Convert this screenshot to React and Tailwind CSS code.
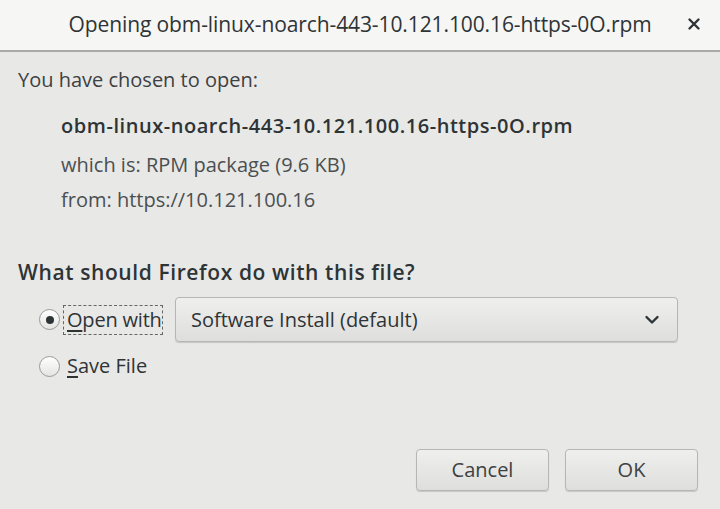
import React from "react";

export default function App() {
  const font = { fontFamily: '"Open Sans", "Noto Sans", sans-serif' };
  const btn =
    "rounded-[4px] border border-[#b6b7b3] bg-gradient-to-b from-[#efefed] to-[#dededc] shadow-[0_1px_1px_rgba(0,0,0,0.15)]";
  return (
    <div className="w-[720px] h-[509px] bg-[#e8e8e7] flex flex-col text-[#2e3436] overflow-hidden" style={font}>
      <div className="h-[52px] bg-[#f6f6f5] border-b-[2px] border-[#a9aaa7] flex items-center relative shrink-0">
        <div className="w-full text-center text-[21px] leading-[28px] tracking-[-0.1px] text-[#2e3436] pb-[2px]">
          Opening obm-linux-noarch-443-10.121.100.16-https-0O.rpm
        </div>
        <div className="absolute left-[687px] top-[17px]">
          <svg width="14" height="14" viewBox="0 0 14 14">
            <path d="M2.5 2.5 L11.5 11.5 M11.5 2.5 L2.5 11.5" stroke="#2e3436" strokeWidth="2.4" strokeLinecap="round" />
          </svg>
        </div>
      </div>
      <div className="flex-1 flex flex-col pl-[18px]">
        <div className="mt-[15px] text-[20px] leading-[26px] text-[#3d4142]">You have chosen to open:</div>
        <div className="ml-[43px] mt-[20px] text-[20px] leading-[26px] font-semibold tracking-[0.55px] text-[#2e3436]">
          obm-linux-noarch-443-10.121.100.16-https-0O.rpm
        </div>
        <div className="ml-[43px] mt-[13px] text-[20px] leading-[26px] text-[#4b4f50]">which is: RPM package (9.6 KB)</div>
        <div className="ml-[43px] mt-[9px] text-[20px] leading-[26px] text-[#4b4f50]">from: https://10.121.100.16</div>
        <div className="mt-[46px] text-[21px] leading-[26px] font-semibold tracking-[0.6px] text-[#2e3436]">
          What should Firefox do with this file?
        </div>
        <div className="flex items-center mt-[12px] ml-[21px]">
          <span className="w-[21px] h-[21px] rounded-full border border-[#9a9b97] bg-gradient-to-b from-[#ffffff] to-[#e4e4e2] flex items-center justify-center shrink-0">
            <span className="w-[8px] h-[8px] rounded-full bg-[#2e3436]"></span>
          </span>
          <span className="ml-[3px] w-[100px] h-[30px] shrink-0 whitespace-nowrap flex items-center pl-[3px] border border-dashed border-[#666] text-[20px] tracking-[-0.2px] text-[#2e3436]">
            <span><span className="underline underline-offset-[3px]">O</span>pen with</span>
          </span>
          <div className={"ml-[12px] w-[503px] h-[45px] shrink-0 flex items-center justify-between pl-[15px] pr-[17px] " + btn}>
            <span className="text-[20px] text-[#2e3436]">Software Install (default)</span>
            <svg width="16" height="10" viewBox="0 0 16 10">
              <path d="M2.5 2 L8 7.5 L13.5 2" stroke="#2e3436" strokeWidth="2.4" fill="none" strokeLinecap="round" strokeLinejoin="round" />
            </svg>
          </div>
        </div>
        <div className="flex items-center mt-[11px] ml-[21px] h-[26px]">
          <span className="w-[21px] h-[21px] rounded-full border border-[#9a9b97] bg-gradient-to-b from-[#ffffff] to-[#e4e4e2] shrink-0"></span>
          <span className="ml-[7px] text-[20px] text-[#2e3436]">
            <span className="underline underline-offset-[3px]">S</span>ave File
          </span>
        </div>
        <div className="flex-1"></div>
        <div className="flex justify-end gap-[16px] mb-[18px] mr-[22px]">
          <button className={"w-[133px] h-[42px] text-[20px] text-[#3d4142] " + btn}>Cancel</button>
          <button className={"w-[133px] h-[42px] text-[20px] text-[#3d4142] " + btn}>OK</button>
        </div>
      </div>
    </div>
  );
}
